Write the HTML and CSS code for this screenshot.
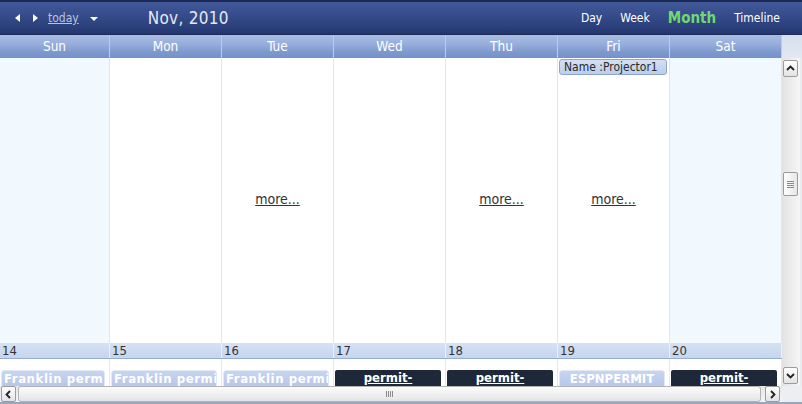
FILE: index.html
```html
<!DOCTYPE html>
<html>
<head>
<meta charset="utf-8">
<link rel="stylesheet" href="styles.css">
</head>
<body>
<div class="sched">
  <div class="toolbar">
    <div class="nav">
      <span class="tri tri-left"></span>
      <span class="tri tri-right"></span>
      <a class="today" href="#">today</a>
      <span class="tri tri-down"></span>
      <span class="title">Nov, 2010</span>
    </div>
    <div class="views">
      <span class="view">Day</span>
      <span class="view">Week</span>
      <span class="view active">Month</span>
      <span class="view">Timeline</span>
    </div>
  </div>
  <div class="frame">
    <div class="main">
      <div class="colhead">
        <div class="ch">Sun</div><div class="ch">Mon</div><div class="ch">Tue</div><div class="ch">Wed</div><div class="ch">Thu</div><div class="ch">Fri</div><div class="ch">Sat</div>
      </div>
      <div class="viewport">
        <div class="week-cells">
          <div class="cell weekend"></div>
          <div class="cell"></div>
          <div class="cell"><a class="more" href="#">more...</a></div>
          <div class="cell"></div>
          <div class="cell"><a class="more" href="#">more...</a></div>
          <div class="cell"><div class="appt">Name :Projector1</div><a class="more" href="#">more...</a></div>
          <div class="cell weekend"></div>
        </div>
        <div class="datehead">
          <div class="dn">14</div><div class="dn">15</div><div class="dn">16</div><div class="dn">17</div><div class="dn">18</div><div class="dn">19</div><div class="dn">20</div>
        </div>
        <div class="events">
          <div class="ecell"><div class="bar light wide">Franklin permit</div></div>
          <div class="ecell"><div class="bar light wide">Franklin permit</div></div>
          <div class="ecell"><div class="bar light wide">Franklin permit</div></div>
          <div class="ecell"><div class="bar dark"><span>permit-</span></div></div>
          <div class="ecell"><div class="bar dark"><span>permit-</span></div></div>
          <div class="ecell"><div class="bar light center">ESPNPERMIT</div></div>
          <div class="ecell"><div class="bar dark"><span>permit-</span></div></div>
        </div>
      </div>
      <div class="hscroll">
        <div class="sbtn"><svg width="9" height="9" viewBox="0 0 9 9"><polyline points="6,1 2.5,4.5 6,8" fill="none" stroke="#222" stroke-width="1.8"/></svg></div>
        <div class="hthumb"><svg width="7" height="6" viewBox="0 0 7 6"><path d="M0.5 0V6M2.5 0V6M4.5 0V6M6.5 0V6" stroke="#8a8a8a" stroke-width="1"/></svg></div>
        <div class="sbtn"><svg width="9" height="9" viewBox="0 0 9 9"><polyline points="3,1 6.5,4.5 3,8" fill="none" stroke="#222" stroke-width="1.8"/></svg></div>
      </div>
    </div>
    <div class="side">
      <div class="side-head"></div>
      <div class="vscroll">
        <div class="vbtn"><svg width="9" height="9" viewBox="0 0 9 9"><polyline points="1,6 4.5,2.5 8,6" fill="none" stroke="#222" stroke-width="1.8"/></svg></div>
        <div class="vthumb"><svg width="7" height="7" viewBox="0 0 7 7"><path d="M0 0.5H7M0 2.5H7M0 4.5H7M0 6.5H7" stroke="#8a8a8a" stroke-width="1"/></svg></div>
        <div class="vspace"></div>
        <div class="vbtn"><svg width="9" height="9" viewBox="0 0 9 9"><polyline points="1,3 4.5,6.5 8,3" fill="none" stroke="#222" stroke-width="1.8"/></svg></div>
      </div>
      <div class="corner"></div>
    </div>
  </div>
</div>
</body>
</html>
```
FILE: styles.css
```css
* { box-sizing: border-box; }
html, body { margin: 0; padding: 0; }
body {
  width: 802px;
  height: 404px;
  overflow: hidden;
  font-family: "DejaVu Sans Condensed", "DejaVu Sans", sans-serif;
  background: #ffffff;
}
.sched {
  width: 802px;
  height: 404px;
  display: flex;
  flex-direction: column;
  background: #eef0f3;
}
.toolbar {
  height: 35px;
  flex: none;
  display: flex;
  align-items: center;
  justify-content: space-between;
  background: linear-gradient(#42599a 0%, #364c8c 40%, #2a3f7a 80%, #23366c 100%);
  border-top: 2px solid #1d2a55;
  border-bottom: 1px solid #1d2b58;
}
.nav {
  display: flex;
  align-items: center;
  padding-left: 15px;
}
.tri { display: block; width: 0; height: 0; }
.tri-left {
  border-right: 5px solid #ffffff;
  border-top: 4px solid transparent;
  border-bottom: 4px solid transparent;
}
.tri-right {
  margin-left: 13px;
  border-left: 5px solid #ffffff;
  border-top: 4px solid transparent;
  border-bottom: 4px solid transparent;
}
.today {
  margin-left: 10px;
  font-size: 12px;
  color: #bcc5dc;
  text-decoration: underline;
}
.tri-down {
  margin-left: 11px;
  margin-top: 1px;
  border-top: 4px solid #ffffff;
  border-left: 4px solid transparent;
  border-right: 4px solid transparent;
}
.title {
  margin-left: 50px;
  font-size: 17px;
  color: #e4e9f4;
  letter-spacing: 0.3px;
}
.views {
  display: flex;
  align-items: center;
  gap: 18px;
  padding-right: 22px;
}
.view {
  font-size: 12px;
  color: #ffffff;
}
.view.active {
  font-size: 15px;
  font-weight: bold;
  color: #6fd96f;
}
.frame {
  flex: 1;
  display: flex;
  min-height: 0;
}
.main {
  width: 782px;
  display: flex;
  flex-direction: column;
}
.colhead {
  height: 23px;
  flex: none;
  display: grid;
  grid-template-columns: 110px repeat(6, 112px);
  background: linear-gradient(#a9bde2 0%, #97aedb 40%, #7d98ce 75%, #7391ca 100%);
}
.ch {
  border-right: 1px solid #bccbe8;
  color: #ffffff;
  font-size: 13.5px;
  text-align: center;
  line-height: 22px;
}
.viewport {
  height: 328px;
  flex: none;
  overflow: hidden;
  background: #ffffff;
}
.week-cells {
  height: 285px;
  display: grid;
  grid-template-columns: 110px repeat(6, 112px);
}
.cell {
  border-right: 1px solid #e0e5ec;
  display: grid;
  grid-template-rows: 1fr;
  grid-template-columns: 1fr;
}
.cell.weekend { background: #f1f8fe; }
.cell > * { grid-area: 1 / 1; }
.more {
  align-self: center;
  justify-self: center;
  font-size: 14px;
  color: #333333;
  text-decoration: underline;
  margin-top: -4px;
}
.appt {
  align-self: start;
  margin: 1px 2px 0 1px;
  height: 16px;
  border: 1px solid #8ea4cd;
  border-radius: 3px;
  background: linear-gradient(#d4e0f3, #bccdeb);
  font-size: 12px;
  color: #2a2a2a;
  line-height: 14px;
  padding-left: 4px;
  white-space: nowrap;
  overflow: hidden;
}
.datehead {
  height: 16px;
  display: grid;
  grid-template-columns: 110px repeat(6, 112px);
  background: linear-gradient(#d6e2f3, #c6d5ee);
  border-bottom: 1px solid #98add4;
}
.dn {
  border-right: 1px solid #eaf0f9;
  font-size: 13px;
  color: #333333;
  line-height: 15px;
  padding-left: 2px;
}
.events {
  height: 27px;
  display: grid;
  grid-template-columns: 110px repeat(6, 112px);
}
.ecell {
  border-right: 1px solid #e3e8ef;
  padding: 11px 4px 0 1px;
}
.bar {
  height: 18px;
  font-size: 13px;
  font-weight: bold;
  color: #ffffff;
  white-space: nowrap;
  overflow: hidden;
  line-height: 15px;
}
.bar.light {
  background: linear-gradient(#c8d5f0, #b6c6ea);
  border: 1px solid #e2e9f6;
  border-radius: 3px;
  padding-left: 2px;
}
.bar.wide { letter-spacing: 0.6px; }
.bar.center { text-align: center; padding-left: 0; }
.bar.dark {
  background: #1f2838;
  border-radius: 2px;
  text-align: center;
  line-height: 16px;
}
.bar.dark span { text-decoration: underline; }
.hscroll {
  height: 16px;
  flex: none;
  display: flex;
  gap: 2px;
  padding: 0 2px 0 1px;
  background: linear-gradient(#e6e6e6, #f5f5f5);
}
.sbtn, .vbtn {
  width: 15px;
  flex: none;
  border: 1px solid #9c9c9c;
  border-radius: 2px;
  background: linear-gradient(#ffffff, #e3e3e3);
  display: flex;
  align-items: center;
  justify-content: center;
}
.hthumb {
  flex: 1;
  margin-right: 2px;
  border: 1px solid #b4b4b4;
  border-radius: 3px;
  background: linear-gradient(#fbfbfb, #e4e4e4);
  display: flex;
  align-items: center;
  justify-content: center;
}
.side {
  width: 20px;
  display: flex;
  flex-direction: column;
  background: #e8ebf0;
}
.side-head {
  height: 23px;
  flex: none;
  background: linear-gradient(#d6dfee, #e3e9f3);
}
.vscroll {
  height: 328px;
  flex: none;
  width: 18px;
  display: flex;
  flex-direction: column;
  padding: 2px 2px 2px 1px;
  background: linear-gradient(to right, #e2e2e2, #f6f6f6);
}
.vbtn { width: 15px; height: 17px; }
.vthumb {
  margin-top: 95px;
  height: 24px;
  border: 1px solid #9c9c9c;
  border-radius: 2px;
  background: linear-gradient(to right, #ffffff, #e6e6e6);
  display: flex;
  align-items: center;
  justify-content: center;
}
.vspace { flex: 1; }
.corner {
  flex: 1;
  background: #eceef1;
  border-bottom: 2px solid #9aa6bd;
}
.main::after {
  content: "";
  display: block;
  height: 2px;
  background: #9aa6bd;
}
```
